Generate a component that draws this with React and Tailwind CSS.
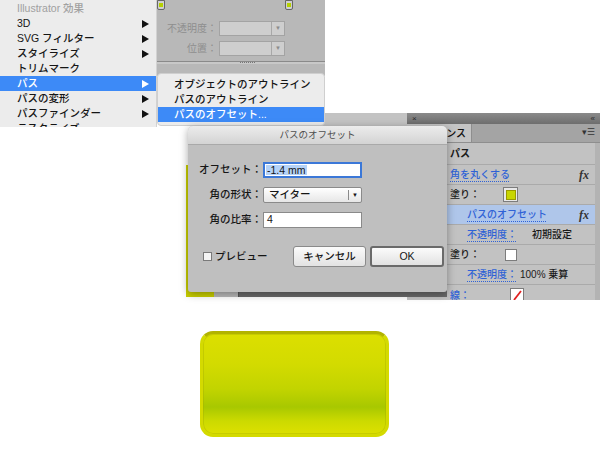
import React from 'react';

const menuItems = [
  { label: 'Illustrator 効果', disabled: true },
  { label: '3D', arrow: true },
  { label: 'SVG フィルター', arrow: true },
  { label: 'スタイライズ', arrow: true },
  { label: 'トリムマーク' },
  { label: 'パス', arrow: true, active: true },
  { label: 'パスの変形', arrow: true },
  { label: 'パスファインダー', arrow: true },
  { label: 'ラスタライズ' },
];

const subItems = [
  { label: 'オブジェクトのアウトライン' },
  { label: 'パスのアウトライン' },
  { label: 'パスのオフセット...', active: true },
];

const Arrow = ({ white }) => (
  <svg width="7" height="8" viewBox="0 0 7 8">
    <path d="M0 0 L7 4 L0 8 Z" fill={white ? '#ffffff' : '#111111'} />
  </svg>
);

const DimSelect = () => (
  <div className="flex w-[66px] h-[15px] border border-[#a3a3a3] bg-[#cecece]">
    <div className="flex-1" />
    <div className="w-[13px] border-l border-[#a8a8a8] flex items-center justify-center text-[6px] text-[#8c8c8c]">▼</div>
  </div>
);

const LockSwatch = () => (
  <div className="w-[8px] h-[10px] border border-[#666] rounded-b-[2px] bg-[#cfcfcf] flex items-center justify-center">
    <div className="w-[4px] h-[4px] bg-[#b5d000]" />
  </div>
);

const Fx = () => (
  <span className="font-['Liberation_Serif',serif] italic font-bold text-[12px] text-[#333]">fx</span>
);

const link = 'text-[#2f62d6] underline decoration-dotted decoration-[#2f62d6] underline-offset-[3px]';

const App = () => {
  return (
    <div className="w-[600px] h-[450px] bg-white overflow-hidden font-['Liberation_Sans','Noto_Sans_CJK_JP',sans-serif]">
      {/* collage of screenshots */}
      <div className="relative h-[300px]">
        {/* transparency panel behind the menu */}
        <div className="absolute left-[150px] top-0 w-[175px] h-[76px] bg-[#b8b8b8] flex flex-col">
          <div className="flex justify-between pl-[7px] pr-[32px]">
            <LockSwatch />
            <LockSwatch />
          </div>
          <div className="flex flex-col gap-[5px] mt-[11px] text-[10px] text-[#8e8e8e]">
            <div className="flex items-center">
              <div className="w-[69px] text-right pr-[2px]">不透明度：</div>
              <DimSelect />
            </div>
            <div className="flex items-center">
              <div className="w-[69px] text-right pr-[2px]">位置：</div>
              <DimSelect />
            </div>
          </div>
          <div className="mt-[5px] h-[3px] border-t border-[#8a8a8a] bg-[#c8c8c8] flex justify-center pl-[20px]">
            <div className="w-[15px] h-[2px] border-t border-dotted border-[#777]" />
          </div>
        </div>

        {/* main effect menu */}
        <div className="absolute left-0 top-0 w-[157px] h-[127px] bg-[#ececec] border-r border-[#d2d2d2] pt-[1px] overflow-hidden font-medium">
          {menuItems.map((item) => (
            <div
              key={item.label}
              className={`flex items-center justify-between h-[15px] pl-[17px] pr-[7px] text-[10.5px] ${
                item.active ? 'bg-[#3d8af7] text-white' : item.disabled ? 'text-[#a0a0a0]' : 'text-[#151515]'
              }`}
            >
              <span>{item.label}</span>
              {item.arrow && <Arrow white={item.active} />}
            </div>
          ))}
        </div>

        {/* gray strip behind the submenu */}
        <div className="absolute left-[320px] top-[113px] w-[90px] h-[14px] bg-[#c3c3c3]" />

        {/* submenu */}
        <div className="absolute left-[157px] top-[73px] w-[168px] h-[53px] bg-[#ececec] rounded-[4px] border border-[#cfcfcf] pt-[3px] overflow-hidden font-medium">
          {subItems.map((item) => (
            <div
              key={item.label}
              className={`flex items-center h-[15px] pl-[16px] text-[10.5px] ${
                item.active ? 'bg-[#3d8af7] text-white' : 'text-[#151515]'
              }`}
            >
              {item.label}
            </div>
          ))}
        </div>

        {/* appearance panel */}
        <div className="absolute left-[407px] top-[113px] w-[193px] h-[187px] flex flex-col bg-[#c2c2c2] overflow-hidden">
          <div className="shrink-0 h-[11px] flex items-center justify-between px-[5px] bg-[linear-gradient(#8a8a8a,#6e6e6e)] text-[8px] leading-none text-[#2a2a2a]">
            <span>×</span>
            <span>«</span>
          </div>
          <div className="shrink-0 h-[19px] flex bg-[#a4a4a4] border-b border-[#8e8e8e]">
            <div className="w-[65px] bg-[#c4c4c4] border-r border-[#8e8e8e] flex items-center justify-end pr-[5px] text-[10px] font-medium text-[#111] whitespace-nowrap overflow-hidden">
              アピアランス
            </div>
            <div className="flex-1" />
            <div className="flex items-center pr-[5px] text-[9px] text-[#333]">▾☰</div>
          </div>
          <div className="shrink-0 flex flex-col border-r-[5px] border-[#b3b3b3] text-[10px] font-medium text-[#1a1a1a]">
            <div className="flex items-center h-[22px] pl-[43px] border-b border-[#aaaaaa] font-bold">パス</div>
            <div className="flex items-center justify-between h-[20px] pl-[43px] pr-[6px] border-b border-[#aaaaaa]">
              <span className={link}>角を丸くする</span>
              <Fx />
            </div>
            <div className="flex items-center h-[20px] pl-[43px] border-b border-[#aaaaaa]">
              <span className="w-[53px]">塗り：</span>
              <div className="w-[15px] h-[15px] border border-[#7c7c7c] bg-[#e8e8e8] flex items-center justify-center">
                <div className="w-[10px] h-[10px] bg-[#c8d600] border border-[#9a9a00]" />
              </div>
            </div>
            <div className="flex items-center justify-between h-[20px] pl-[60px] pr-[6px] border-b border-[#aaaaaa] bg-[#afc6ea]">
              <span className={link}>パスのオフセット</span>
              <Fx />
            </div>
            <div className="flex items-center h-[20px] pl-[60px] border-b border-[#aaaaaa]">
              <span className={`w-[65px] ${link}`}>不透明度：</span>
              <span>初期設定</span>
            </div>
            <div className="flex items-center h-[20px] pl-[43px] border-b border-[#aaaaaa]">
              <span className="w-[55px]">塗り：</span>
              <div className="w-[12px] h-[12px] border border-[#7c7c7c] bg-white" />
            </div>
            <div className="flex items-center h-[20px] pl-[60px] border-b border-[#aaaaaa]">
              <span className={`w-[53px] ${link}`}>不透明度：</span>
              <span>100% 乗算</span>
            </div>
            <div className="flex items-center h-[20px] pl-[43px]">
              <span className={`w-[60px] ${link}`}>線：</span>
              <div className="w-[14px] h-[14px] border border-[#7c7c7c] bg-white overflow-hidden">
                <svg width="12" height="12" viewBox="0 0 12 12">
                  <line x1="10" y1="2" x2="3" y2="11" stroke="#e02020" strokeWidth="1.8" />
                </svg>
              </div>
            </div>
          </div>
        </div>

        {/* artwork edge behind the dialog */}
        <div className="absolute left-[186px] top-[165px] w-[4px] h-[132px] bg-[#c9cf00]" />
        <div className="absolute left-[188px] top-[290px] w-[259px] h-[7px] flex">
          <div className="w-[26px] bg-[#c9cf00]" />
          <div className="w-[25px] bg-[#b9b9b9] border-r border-[#555]" />
          <div className="flex-1 bg-[#6a6a6a]" />
        </div>

        {/* offset path dialog */}
        <div className="absolute left-[188px] top-[126px] w-[259px] h-[166px] flex flex-col bg-[#bfbfbf] rounded-t-[5px] rounded-b-[3px] shadow-[0_2px_8px_rgba(0,0,0,0.35)] text-[10.5px] font-medium text-[#151515]">
          <div className="h-[19px] flex items-center justify-center rounded-t-[5px] bg-[linear-gradient(#ececec,#d3d3d3)] border-b border-[#a9a9a9] text-[9.5px] font-normal text-[#4e4e4e]">
            パスのオフセット
          </div>
          <div className="flex flex-col gap-[9px] pt-[17px]">
            <div className="flex items-center">
              <div className="w-[75px] text-right pr-[1px]">オフセット：</div>
              <div className="w-[99px] h-[16px] border-2 border-[#3b78d8] bg-white flex items-center pl-[1px] leading-none">
                <span className="bg-[#b4d2f8] px-[1px]">-1.4 mm</span>
              </div>
            </div>
            <div className="flex items-center">
              <div className="w-[75px] text-right pr-[1px]">角の形状：</div>
              <div className="w-[99px] h-[16px] border border-[#8a8a8a] rounded-[2px] bg-[linear-gradient(#ffffff,#e6e6e6)] flex items-center">
                <span className="flex-1 pl-[5px]">マイター</span>
                <div className="w-[13px] h-[10px] border-l border-[#8a8a8a] flex items-center justify-center text-[6px]">▼</div>
              </div>
            </div>
            <div className="flex items-center">
              <div className="w-[75px] text-right pr-[1px]">角の比率：</div>
              <div className="w-[99px] h-[16px] border border-[#8a8a8a] bg-white flex items-center pl-[3px]">4</div>
            </div>
          </div>
          <div className="flex items-center mt-[18px] pl-[15px]">
            <div className="w-[9px] h-[9px] border border-[#7a7a7a] bg-[#f4f4f4]" />
            <span className="ml-[3px] w-[78px]">プレビュー</span>
            <div className="w-[73px] h-[21px] border border-[#8a8a8a] rounded-[3px] bg-[linear-gradient(#fbfbfb,#e2e2e2)] flex items-center justify-center">
              キャンセル
            </div>
            <div className="ml-[4px] w-[74px] h-[21px] border-2 border-[#6a6a6a] rounded-[3px] bg-[linear-gradient(#fbfbfb,#e2e2e2)] flex items-center justify-center">
              OK
            </div>
          </div>
        </div>
      </div>

      {/* rounded green button shape */}
      <div className="pt-[31px] pl-[200px]">
        <div className="w-[189px] h-[106px] rounded-[13px] border-[3px] border-[#d4da00] border-t-[#b2b300] bg-[linear-gradient(to_bottom,#dcdf00_0%,#d3db00_30%,#c2d400_55%,#a8c800_73%,#ccda00_87%,#dde000_100%)] shadow-[inset_0_0_0_1px_rgba(160,170,0,0.35)]" />
      </div>
    </div>
  );
};

export default App;
